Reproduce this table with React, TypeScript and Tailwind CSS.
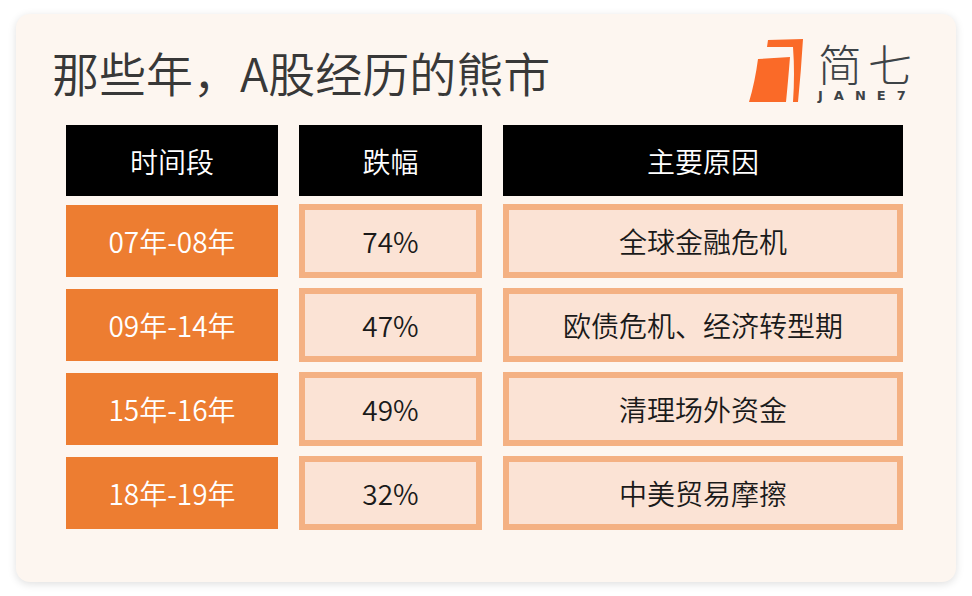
const rows = [
  { period: '07年-08年', drop: '74%', reason: '全球金融危机' },
  { period: '09年-14年', drop: '47%', reason: '欧债危机、经济转型期' },
  { period: '15年-16年', drop: '49%', reason: '清理场外资金' },
  { period: '18年-19年', drop: '32%', reason: '中美贸易摩擦' },
]

function Logo() {
  return (
    <div className="flex items-center gap-[13px]">
      {/* orange mark */}
      <svg width="56" height="66" viewBox="6 8 56 66" className="shrink-0">
        <path d="M25,10 L60,9 Q58,42 55,72 L50,72 Q52,44 50,17 L24,17 Z" fill="#fa6a28" />
        <path d="M15,29 L47,27 Q45,52 43,72 L6,72 Q12,52 15,29 Z" fill="#fa6a28" />
      </svg>
      <div className="flex flex-col items-start">
        <div className="h-[44px] flex items-center text-[44px] leading-none font-light text-[#3d4347] tracking-[6px]">
          简七
        </div>
        <div className="mt-[5px] h-[12px] flex items-center text-[13px] leading-none font-bold text-[#3d4347] tracking-[11px] font-['DejaVu_Sans',sans-serif]">
          JANE7
        </div>
      </div>
    </div>
  )
}

export default function App() {
  return (
    <div className="w-[972px] h-[596px] bg-white pl-[16px] pt-[14px] font-['Noto_Sans_CJK_SC',sans-serif]">
      <div className="w-[940px] h-[568px] rounded-[14px] bg-[#fdf6f0] shadow-[0_2px_8px_rgba(0,0,0,0.13)] flex flex-col">
        {/* Header */}
        <div className="mt-[19px] h-[76px] flex items-center justify-between pl-[36px] pr-[38px]">
          <h1 className="text-[47px] leading-none font-[350] text-[#383838]">那些年，A股经历的熊市</h1>
          <Logo />
        </div>

        {/* Table */}
        <div className="mt-[16px] ml-[50px] flex flex-col">
          <div className="flex gap-[21px] h-[71px] mb-[8px] text-white text-[28px] leading-none font-[350]">
            <div className="w-[212px] bg-black flex items-center justify-center">时间段</div>
            <div className="w-[183px] bg-black flex items-center justify-center">跌幅</div>
            <div className="w-[400px] bg-black flex items-center justify-center">主要原因</div>
          </div>

          <div className="flex flex-col gap-[10px]">
            {rows.map((r) => (
              <div key={r.period} className="flex items-center gap-[21px] h-[74px] text-[28px] leading-none font-[350]">
                <div className="w-[212px] h-[72px] bg-[#ed7d31] text-white flex items-center justify-center">
                  {r.period}
                </div>
                <div className="w-[183px] h-[74px] bg-[#fbe3d5] border-[6px] border-[#f4b183] text-[#1a1a1a] flex items-center justify-center">
                  {r.drop}
                </div>
                <div className="w-[400px] h-[74px] bg-[#fbe3d5] border-[6px] border-[#f4b183] text-[#1a1a1a] flex items-center justify-center">
                  {r.reason}
                </div>
              </div>
            ))}
          </div>
        </div>
      </div>
    </div>
  )
}
